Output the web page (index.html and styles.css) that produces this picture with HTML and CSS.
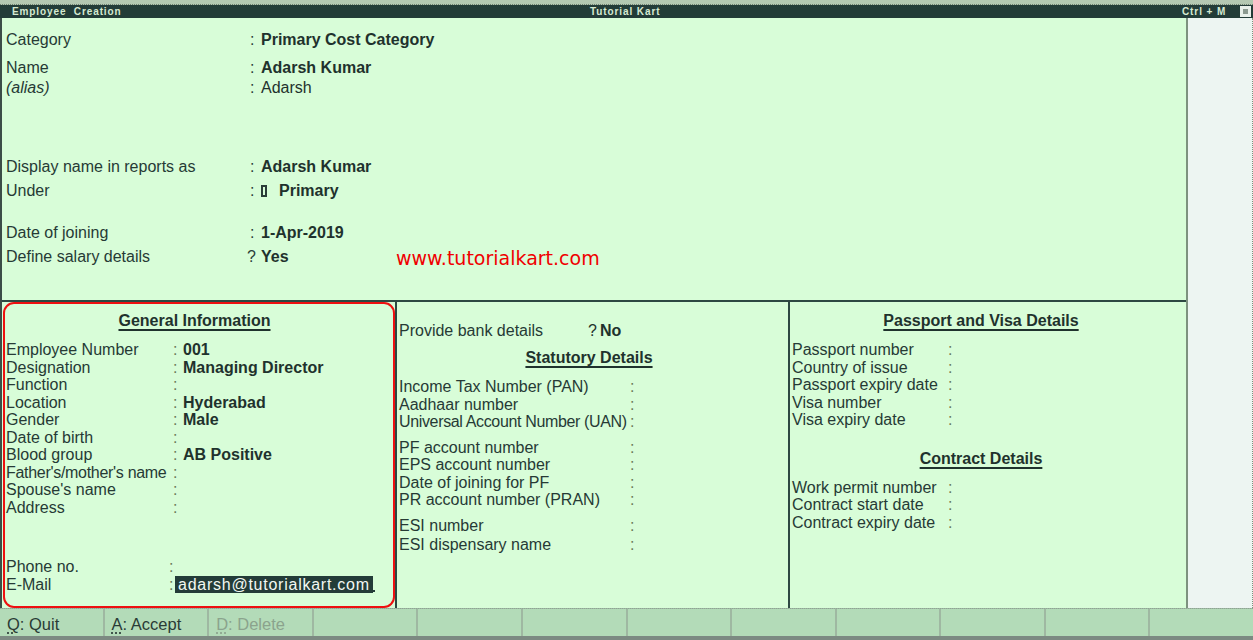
FILE: index.html
```html
<!DOCTYPE html>
<html>
<head>
<meta charset="utf-8">
<link rel="stylesheet" href="styles.css">
</head>
<body>
<div class="window">
  <div class="topstrip"></div>
  <div class="titlebar">
    <span class="t-left">Employee&nbsp; Creation</span>
    <span class="t-center">Tutorial Kart</span>
    <span class="t-right">Ctrl + M</span>
    <span class="t-box"><span></span></span>
  </div>
  <div class="body">
    <div class="main">
      <div class="upper">
        <div class="urow r-cat"><span class="ulabel">Category</span><span class="ucolon">:</span><span class="uval">Primary Cost Category</span></div>
        <div class="urow r-name"><span class="ulabel">Name</span><span class="ucolon">:</span><span class="uval">Adarsh Kumar</span></div>
        <div class="urow"><span class="ulabel"><i>(alias)</i></span><span class="ucolon">:</span><span class="uval plain">Adarsh</span></div>
        <div class="urow r-disp"><span class="ulabel">Display name in reports as</span><span class="ucolon">:</span><span class="uval">Adarsh Kumar</span></div>
        <div class="urow r-under"><span class="ulabel">Under</span><span class="ucolon">:</span><span class="uval"><span class="gbox"></span>Primary</span></div>
        <div class="urow r-doj"><span class="ulabel">Date of joining</span><span class="ucolon">:</span><span class="uval">1-Apr-2019</span></div>
        <div class="urow r-sal"><span class="ulabel">Define salary details</span><span class="ucolon q">?</span><span class="uval">Yes</span>
          <span class="watermark">www.tutorialkart.com</span></div>
      </div>
      <div class="lower">
        <div class="col col1">
          <div class="heading"><span>General Information</span></div>
          <div class="fields f1">
            <div class="frow"><span>Employee Number</span><span class="c">:</span><b>001</b></div>
            <div class="frow"><span>Designation</span><span class="c">:</span><b>Managing Director</b></div>
            <div class="frow"><span>Function</span><span class="c">:</span><b></b></div>
            <div class="frow"><span>Location</span><span class="c">:</span><b>Hyderabad</b></div>
            <div class="frow"><span>Gender</span><span class="c">:</span><b>Male</b></div>
            <div class="frow"><span>Date of birth</span><span class="c">:</span><b></b></div>
            <div class="frow"><span>Blood group</span><span class="c">:</span><b>AB Positive</b></div>
            <div class="frow"><span class="narrow">Father's/mother's name</span><span class="c">:</span><b></b></div>
            <div class="frow"><span>Spouse's name</span><span class="c">:</span><b></b></div>
            <div class="frow"><span>Address</span><span class="c">:</span><b></b></div>
            <div class="frow gap-phone"><span>Phone no.</span><span class="c cl">:</span><b></b></div>
            <div class="frow"><span>E-Mail</span><span class="c cl">:</span><b class="sel">adarsh@tutorialkart.com</b><span class="cursor"></span></div>
          </div>
        </div>
        <div class="col col2">
          <div class="bank"><span class="bank-l">Provide bank details</span><span class="bank-q">?</span><b>No</b></div>
          <div class="heading h-stat"><span>Statutory Details</span></div>
          <div class="fields f2">
            <div class="frow"><span>Income Tax Number (PAN)</span><span class="c">:</span><b></b></div>
            <div class="frow"><span>Aadhaar number</span><span class="c">:</span><b></b></div>
            <div class="frow"><span class="tight">Universal Account Number (UAN)</span><span class="c">:</span><b></b></div>
            <div class="frow gap-s"><span>PF account number</span><span class="c">:</span><b></b></div>
            <div class="frow"><span>EPS account number</span><span class="c">:</span><b></b></div>
            <div class="frow"><span>Date of joining for PF</span><span class="c">:</span><b></b></div>
            <div class="frow"><span>PR account number (PRAN)</span><span class="c">:</span><b></b></div>
            <div class="frow gap-s"><span>ESI number</span><span class="c">:</span><b></b></div>
            <div class="frow gap-t"><span>ESI dispensary name</span><span class="c">:</span><b></b></div>
          </div>
        </div>
        <div class="col col3">
          <div class="heading"><span>Passport and Visa Details</span></div>
          <div class="fields f3">
            <div class="frow"><span>Passport number</span><span class="c">:</span><b></b></div>
            <div class="frow"><span>Country of issue</span><span class="c">:</span><b></b></div>
            <div class="frow"><span>Passport expiry date</span><span class="c">:</span><b></b></div>
            <div class="frow"><span>Visa number</span><span class="c">:</span><b></b></div>
            <div class="frow"><span>Visa expiry date</span><span class="c">:</span><b></b></div>
          </div>
          <div class="heading h-con"><span>Contract Details</span></div>
          <div class="fields f3">
            <div class="frow"><span>Work permit number</span><span class="c">:</span><b></b></div>
            <div class="frow"><span>Contract start date</span><span class="c">:</span><b></b></div>
            <div class="frow"><span>Contract expiry date</span><span class="c">:</span><b></b></div>
          </div>
        </div>
      </div>
    </div>
    <div class="side"></div>
  </div>
  <div class="buttonbar">
    <div class="btn"><span><u>Q</u>: Quit</span></div>
    <div class="btn"><span><u>A</u>: Accept</span></div>
    <div class="btn dis"><span><u>D</u>: Delete</span></div>
    <div class="btn"></div>
    <div class="btn"></div>
    <div class="btn"></div>
    <div class="btn"></div>
    <div class="btn"></div>
    <div class="btn"></div>
    <div class="btn"></div>
    <div class="btn"></div>
    <div class="btn"></div>
  </div>
  <div class="bottomstrip"></div>
</div>
</body>
</html>
```

FILE: styles.css
```css
* { box-sizing: border-box; }
html, body { margin: 0; padding: 0; }
body {
  width: 1253px;
  height: 640px;
  overflow: hidden;
  font-family: "Liberation Sans", Arial, sans-serif;
  font-size: 16px;
  color: #1f322d;
  background: #d8fdd8;
}
.window { width: 1253px; height: 640px; display: flex; flex-direction: column; }

.topstrip {
  height: 5px;
  background: #b4c8b2;
  border-bottom: 1px dotted #6f8070;
}
.titlebar {
  height: 13px;
  background: #233c38;
  color: #d6ead2;
  font-size: 10px;
  font-weight: bold;
  line-height: 13px;
  letter-spacing: 0.9px;
  display: flex;
  align-items: center;
  padding-left: 12px;
  position: relative;
}
.t-left { flex: 0 0 auto; }
.t-center { position: absolute; left: 590px; }
.t-right { position: absolute; left: 1182px; }
.t-box {
  position: absolute; left: 1240px; top: 1px;
  width: 11px; height: 11px;
  background: #e8f0ea;
  display: flex; align-items: center; justify-content: center;
}
.t-box span { width: 5px; height: 5px; background: #8b9a90; }

.body { flex: 1 1 auto; display: flex; min-height: 0; }
.main {
  width: 1186px;
  display: flex; flex-direction: column;
  border-left: 2px solid #3b4d47;
  background: #d8fdd8;
}
.side {
  flex: 1 1 auto;
  background: #edf5f2;
  border-left: 2px solid #7d927f;
  border-right: 1px dotted #7d927f;
}

/* upper */
.upper {
  height: 284px;
  padding-top: 12px;
  border-bottom: 2px solid #2d4842;
}
.urow { display: flex; height: 20px; line-height: 20px; align-items: center; position: relative; }
.ulabel { width: 248px; padding-left: 4px; color: #263a35; }
.ucolon { width: 11px; color: #2c3f3a; }
.ucolon.q { margin-left: -3px; width: 14px; }
.uval { font-weight: bold; display: flex; align-items: center; }
.uval.plain { font-weight: normal; }
.r-name { margin-top: 8px; }
.r-disp { margin-top: 59px; }
.r-under { margin-top: 4px; }
.r-doj { margin-top: 22px; }
.r-sal { margin-top: 4px; }
.gbox {
  display: inline-block;
  width: 6px; height: 12px;
  border: 2px solid #2a3d38;
  border-left-width: 2px;
  margin-right: 12px;
}
.watermark {
  position: absolute;
  left: 394px; top: 1px;
  font-family: "DejaVu Sans", sans-serif;
  font-size: 19px;
  color: #f00000;
  font-weight: normal;
}

/* lower */
.lower { flex: 1 1 auto; display: flex; }
.col { height: 100%; }
.col1 {
  width: 392px;
  border: 2px solid #ee1010;
  border-radius: 11px;
  margin-left: 1px;
  padding-top: 7px;
  padding-left: 1px;
}
.col2 {
  width: 393px;
  border-left: 2px solid #2d4842;
  padding-left: 2px;
  padding-top: 19px;
}
.col3 {
  flex: 1 1 auto;
  border-left: 2px solid #2d4842;
  padding-left: 2px;
  padding-top: 9px;
}
.heading {
  text-align: center;
  font-weight: bold;
  height: 20px;
  line-height: 20px;
}
.heading span {
  text-decoration: underline;
  text-underline-offset: 3px;
  text-decoration-thickness: 2px;
}
.col1 .heading { width: 377px; }
.col2 .heading { width: 380px; }
.col3 .heading { width: 378px; }
.fields { margin-top: 10px; }
.h-stat { margin-top: 7px; }
.f2 { margin-top: 10px; }
.h-con { margin-top: 20px; }

.frow { display: flex; height: 17.5px; line-height: 17.5px; white-space: nowrap; }
.frow span:first-child { color: #263a35; flex: 0 0 auto; }
.frow .c { color: #6b7a58; width: 10px; flex: 0 0 auto; }
.frow b { color: #1f322d; }
.f1 .frow span:first-child { width: 167px; }
.f1 .narrow { letter-spacing: -0.3px; }
.f1 .cl { margin-left: -4px; width: 6px; }
.f2 .frow span:first-child { width: 231px; }
.f2 .tight { letter-spacing: -0.35px; }
.f3 .frow span:first-child { width: 156px; }
.gap-phone { margin-top: 42px; }
.gap-s { margin-top: 8px; }
.gap-t { margin-top: 1.5px; }
.sel {
  background: #233c38;
  color: #f2f8f2 !important;
  font-weight: normal;
  padding: 0 3px 0 3px;
  letter-spacing: 0.75px;
}
.cursor {
  width: 2px; height: 2px; background: #233c38;
  align-self: flex-end; margin-bottom: 1px;
}
.bank { display: flex; height: 20px; line-height: 20px; }
.bank-l { width: 189px; color: #263a35; }
.bank-q { width: 12px; }

/* buttons */
.buttonbar {
  height: 28px;
  display: grid;
  grid-template-columns: repeat(12, 1fr);
  background: #9fb8a2;
  gap: 2px;
  border-top: 1px dotted #8ea594;
}
.btn {
  display: flex; align-items: center;
  padding-left: 7px;
  padding-top: 4px;
  background-image: radial-gradient(#e9e6a8 0.6px, transparent 0.8px);
  background-size: 6px 4px;
  background-color: #b3dbb8;
}
.btn span {
  background: #b3dbb8;
  color: #2a3b36;
  padding-right: 4px;
  font-size: 16.5px;
}
.btn u { text-decoration-style: dotted; text-underline-offset: 3px; }
.btn.dis span { color: #8ba38d; }
.bottomstrip { height: 4px; background: #7c8a82; }
```
